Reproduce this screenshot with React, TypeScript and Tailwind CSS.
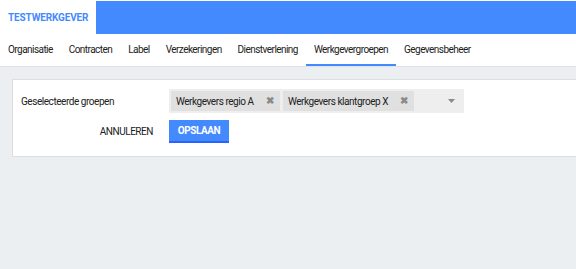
import React from 'react';

const tabs = ['Organisatie', 'Contracten', 'Label', 'Verzekeringen', 'Dienstverlening', 'Werkgevergroepen', 'Gegevensbeheer'];
const groups = [
  { name: 'Werkgevers regio A', w: 'w-[109px]' },
  { name: 'Werkgevers klantgroep X', w: 'w-[131px]' },
];

export default function App() {
  return (
    <div className="w-[576px] h-[269px] overflow-hidden bg-[#eceff1] text-[#212121] font-['Roboto',sans-serif] text-[10px] tracking-[-0.45px] whitespace-nowrap">
      {/* Top bar */}
      <div className="flex h-[34px] bg-white pt-px">
        <div className="w-[96px] flex items-center pl-2 font-bold text-[#448aff] tracking-[-0.15px]">TESTWERKGEVER</div>
        <div className="flex-1 bg-[#448aff]" />
      </div>

      {/* Tabs */}
      <div className="flex h-[33px] bg-white border-b border-[#dfe3e6] tracking-[-0.55px]">
        {tabs.map((t) => (
          <div
            key={t}
            className={`px-2 flex items-center border-b-2 ${
              t === 'Werkgevergroepen' ? 'border-[#448aff]' : 'border-transparent'
            }`}
          >
            {t}
          </div>
        ))}
      </div>

      {/* Card */}
      <div className="ml-3 mt-3 w-[580px] bg-white border border-[#dcdfe2] pt-[9px] pb-[13px]">
        <div className="flex items-center">
          <div className="w-[156px] pl-2">Geselecteerde groepen</div>
          <div className="w-[295px] h-6 bg-[#eeeeee] flex items-center pl-0.5 gap-[3px]">
            {groups.map((g) => (
              <div key={g.name} className={`${g.w} h-5 bg-[#e0e0e0] flex items-center justify-between pl-[5px] pr-[6px]`}>
                <span>{g.name}</span>
                <span className="text-[#8a8a8a] text-[10px] font-bold leading-none">✖</span>
              </div>
            ))}
            <div className="flex-1 flex justify-end pr-[9px]">
              <svg width="7" height="4" viewBox="0 0 7 4">
                <path d="M0 0 L7 0 L3.5 4 Z" fill="#8a8a8a" />
              </svg>
            </div>
          </div>
        </div>
        <div className="flex items-center mt-[7px]">
          <div className="w-[156px] flex justify-end pr-2">
            <button className="px-2 h-[23px]">ANNULEREN</button>
          </div>
          <button className="h-[23px] w-[60px] bg-[#448aff] text-white font-bold border-b-2 border-[#2962ff]">
            OPSLAAN
          </button>
        </div>
      </div>
    </div>
  );
}
